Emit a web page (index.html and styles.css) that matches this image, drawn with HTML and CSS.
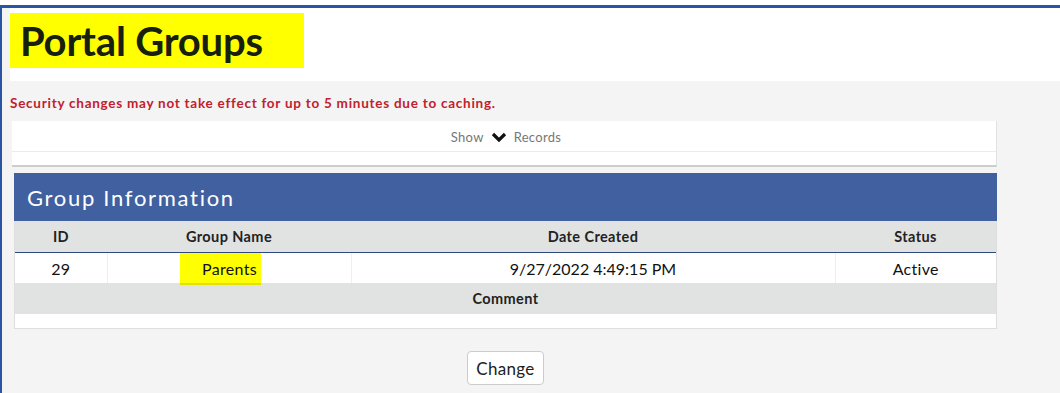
FILE: index.html
```html
<!DOCTYPE html>
<html lang="en">
<head>
  <meta charset="UTF-8">
  <meta name="viewport" content="width=device-width, initial-scale=1.0">
  <title>Portal Groups</title>
  <link rel="stylesheet" href="styles.css">
</head>
<body>
  <div id="topbar"></div>
  <div id="page">
    <div id="page-header">
      <h1 class="title">Portal Groups</h1>
    </div>
    <p class="notice">Security changes may not take effect for up to 5 minutes due to caching.</p>

    <div id="records-panel">
      <div class="records-toggle">
        Show
        <svg class="chevron" width="16" height="12" viewBox="0 0 16 12">
          <path d="M2 3 L8 9 L14 3" fill="none" stroke="#111" stroke-width="3.2" stroke-linejoin="miter"/>
        </svg>
        Records
      </div>
      <div class="records-body"></div>
    </div>

    <div id="group-panel">
      <div class="group-heading">Group Information</div>
      <table class="group-table">
        <thead>
          <tr>
            <th class="col-id">ID</th>
            <th class="col-name">Group Name</th>
            <th class="col-date">Date Created</th>
            <th class="col-status">Status</th>
          </tr>
        </thead>
        <tbody>
          <tr class="data-row">
            <td>29</td>
            <td><span class="mark">Parents</span></td>
            <td class="date">9/27/2022 4:49:15 PM</td>
            <td>Active</td>
          </tr>
          <tr class="comment-head">
            <th colspan="4">Comment</th>
          </tr>
          <tr class="comment-row">
            <td colspan="4"></td>
          </tr>
        </tbody>
      </table>
    </div>

    <div class="actions">
      <button class="btn">Change</button>
    </div>
  </div>
</body>
</html>
```

FILE: styles.css
```css
body {
  margin: 0;
  padding: 0;
  background-color: #f4f4f4;
  font-family: Lato, "Open Sans", sans-serif;
  color: #111;
}
#topbar {
  height: 5px;
  background: #fff;
  border-bottom: 3px solid #2b54a3;
}
#page {
  border-left: 2px solid #2b54a3;
  padding-left: 8px;
  height: 385px;
}
#page-header {
  background: #fff;
  height: 73px;
  padding-top: 5px;
  box-sizing: border-box;
}
.title {
  display: block;
  width: 294px;
  height: 55px;
  margin: 0;
  padding-left: 10px;
  box-sizing: border-box;
  background: #ffff00;
  font-size: 40px;
  font-weight: 700;
  line-height: 56px;
  color: #17200f;
  letter-spacing: -0.2px;
}
.notice {
  margin: 14px 0 0;
  font-size: 13.5px;
  font-weight: 700;
  line-height: 16px;
  letter-spacing: 0.75px;
  color: #c2202c;
}
#records-panel {
  margin: 10px 0 0 2px;
  width: 984px;
  background: #fff;
  border-right: 1px solid #e2e2e2;
  border-bottom: 2px solid #cdcdcd;
}
.records-toggle {
  height: 31px;
  border-bottom: 1px solid #e6ecec;
  box-sizing: border-box;
  display: flex;
  align-items: center;
  justify-content: center;
  gap: 7px;
  font-size: 13px;
  letter-spacing: 0.3px;
  color: #777;
  padding-left: 4px;
  padding-top: 1px;
}
.chevron {
  display: block;
}
.records-body {
  height: 13px;
}
#group-panel {
  margin: 6px 0 0 4px;
  width: 983px;
  background: #fff;
  border: 1px solid #dedede;
  border-top: none;
  box-sizing: border-box;
}
.group-heading {
  height: 48px;
  margin: 0 -1px;
  background: #4060a0;
  color: #fff;
  font-size: 22px;
  line-height: 50px;
  padding-left: 13px;
  letter-spacing: 1.7px;
}
.group-table {
  width: 100%;
  border-collapse: collapse;
  table-layout: fixed;
}
.group-table th {
  background: #e1e3e3;
  font-size: 14.5px;
  font-weight: 700;
  letter-spacing: 0.4px;
  height: 31px;
  padding: 0;
  color: #222;
}
.group-table thead th {
  height: 31px;
  border-bottom: 1px solid #2f4a80;
}
.col-id { width: 92px; }
.col-name { width: 244px; }
.col-date { width: 484px; }
.data-row td {
  height: 30px;
  padding: 0;
  text-align: center;
  font-size: 16px;
  letter-spacing: 0.3px;
  border-right: 1px solid #eeeeee;
  vertical-align: middle;
}
.data-row td.date {
  letter-spacing: 0;
}
.data-row td:last-child {
  border-right: none;
}
.mark {
  display: inline-block;
  background: #ffff00;
  padding: 5px 4px 4px 22px;
  line-height: 21px;
  border-bottom: 2px solid #e2e200;
  margin: 0 17px -2px 0;
  position: relative;
}
.comment-row td {
  height: 14px;
  padding: 0;
}
.actions {
  width: 983px;
  margin-left: 4px;
  text-align: center;
  padding-top: 22px;
}
.btn {
  font-family: Lato, "Open Sans", sans-serif;
  font-size: 17px;
  letter-spacing: 0.3px;
  color: #222;
  background: #fff;
  border: 1px solid #cccccc;
  border-radius: 4px;
  height: 34px;
  width: 77px;
  padding: 0;
  cursor: pointer;
}
```
